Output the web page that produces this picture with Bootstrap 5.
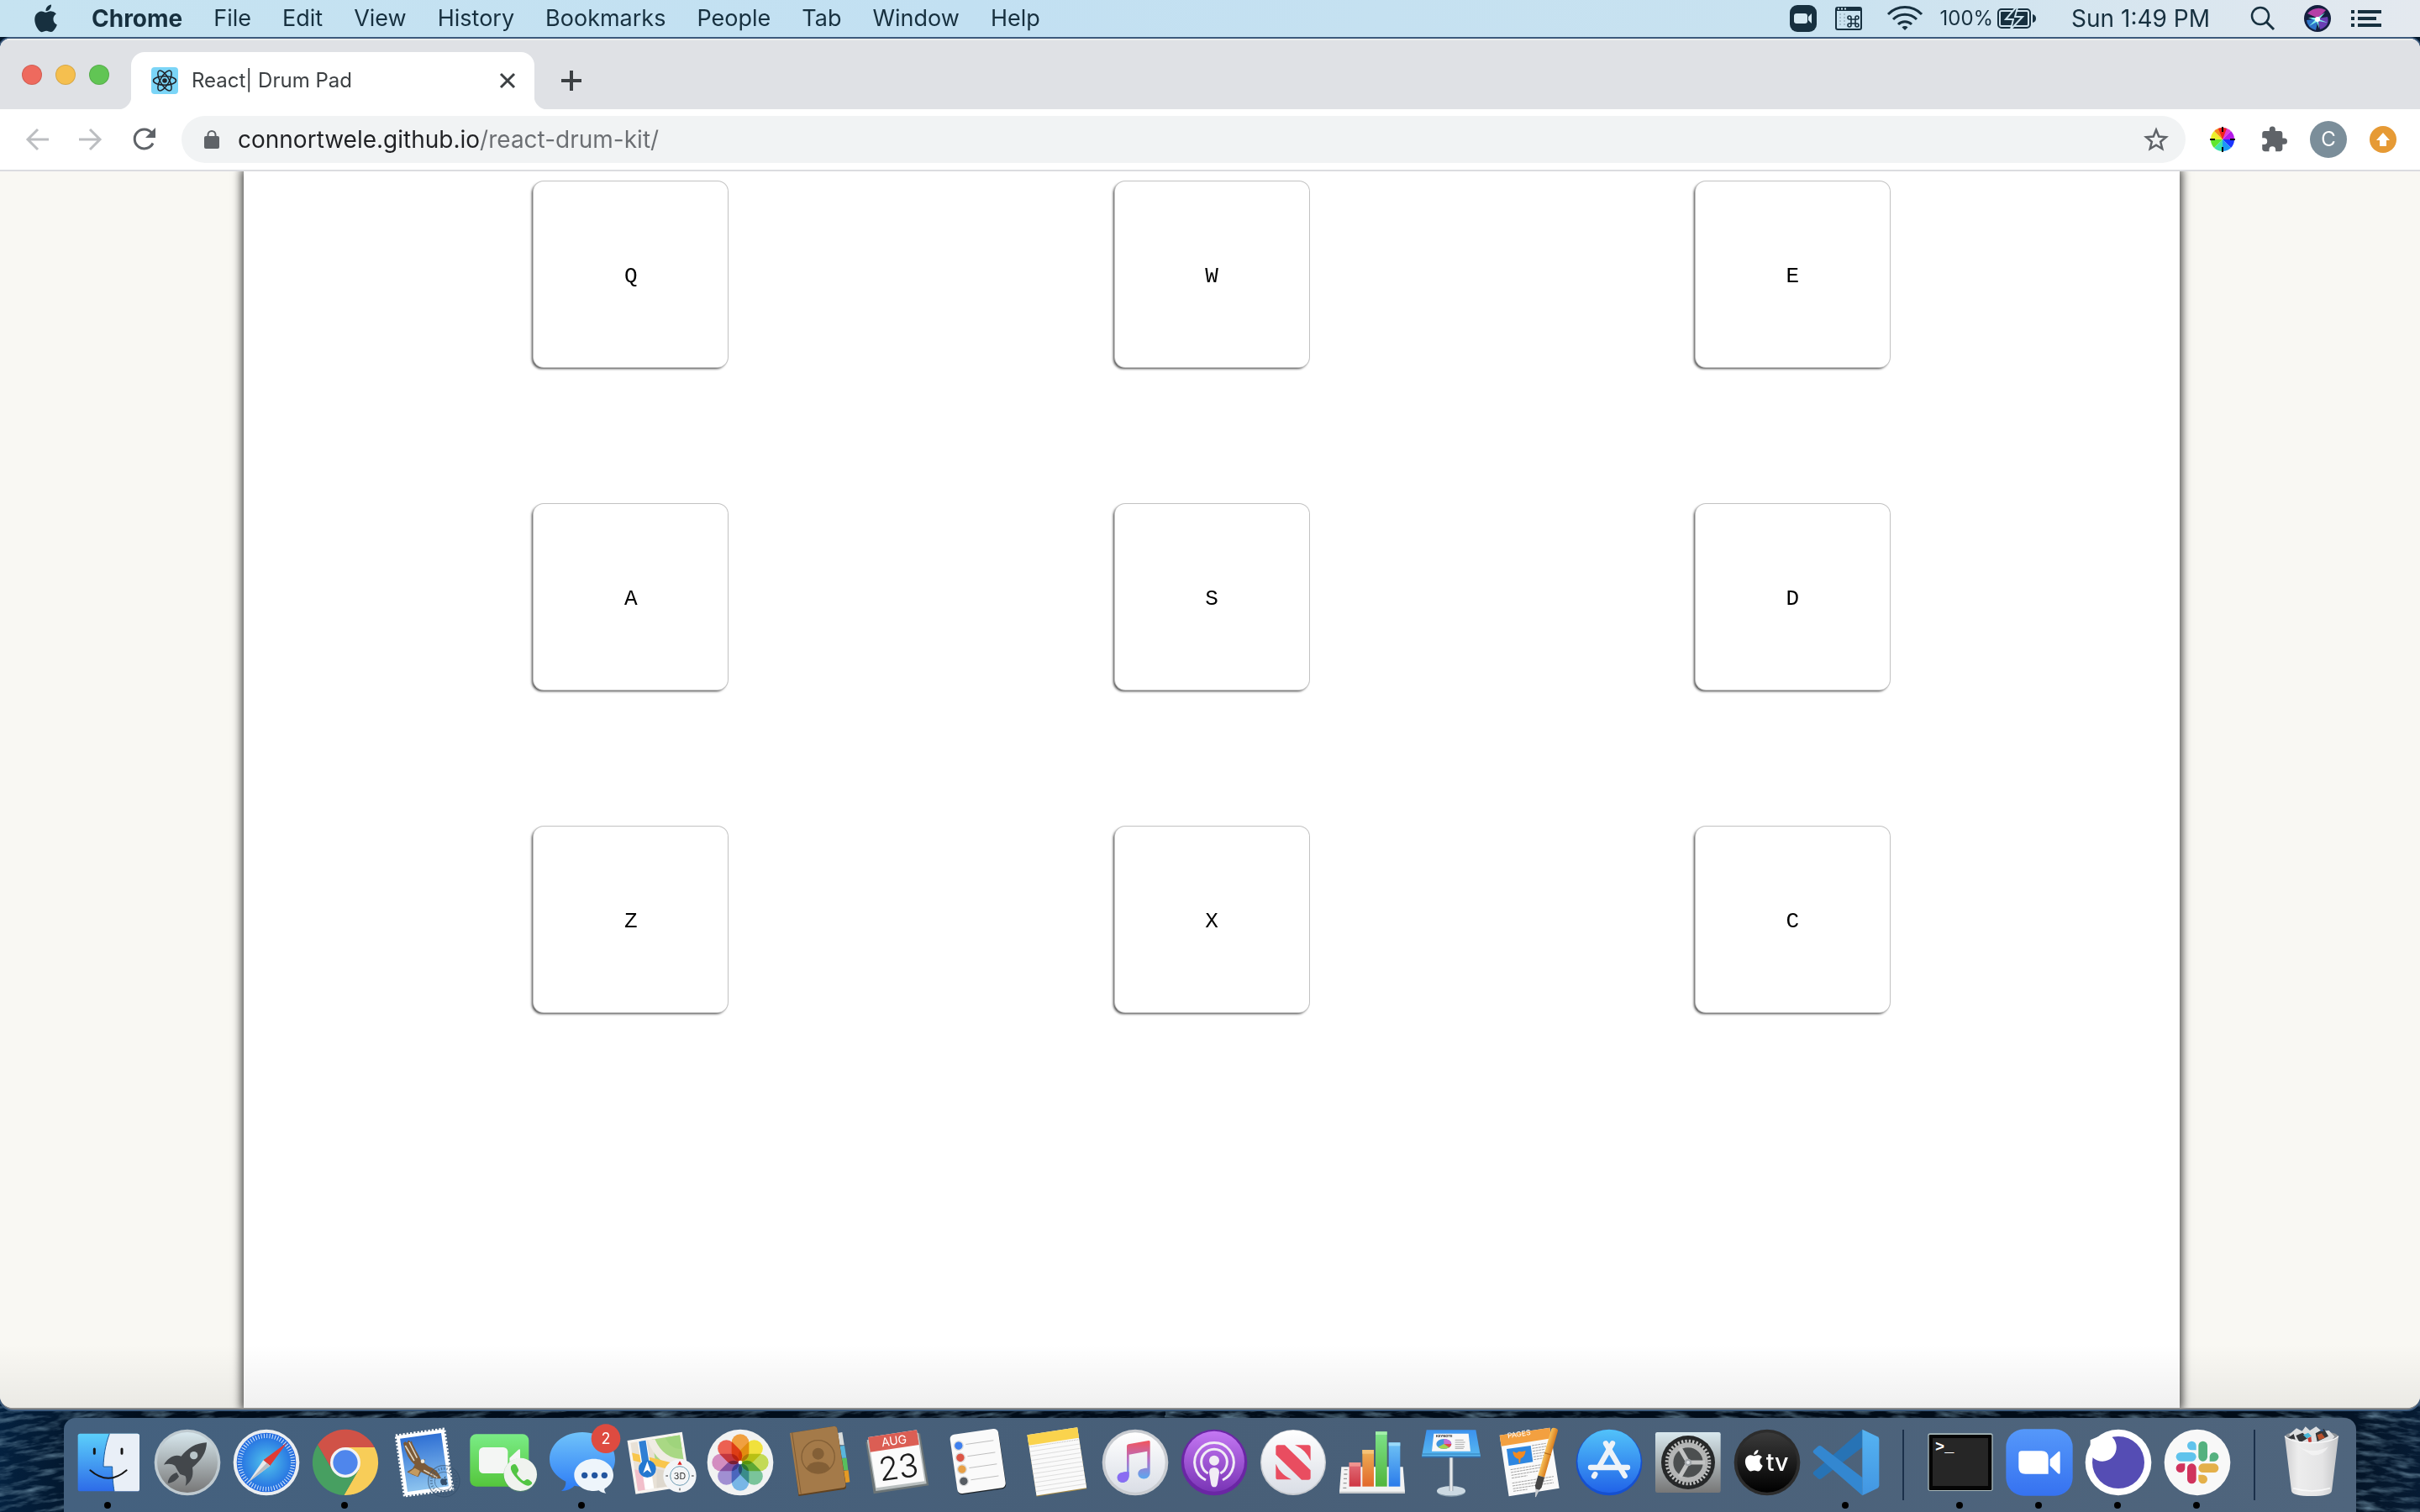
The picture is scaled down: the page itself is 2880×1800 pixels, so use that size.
<!DOCTYPE html>
<html lang="en">
<head>
<meta charset="utf-8">
<meta name="viewport" content="width=device-width, initial-scale=1">
<title>React| Drum Pad</title>
<link rel="stylesheet" href="https://cdn.jsdelivr.net/npm/bootstrap@5.3.0/dist/css/bootstrap.min.css">
<style>
  body { font-family: Inter, "Liberation Sans", sans-serif; background: #04182c; }
  svg { display: block; flex: none; overflow: visible; }
  .btn, .btn:hover { border: 0; padding: 0; color: inherit; border-radius: 0; }
  .desktop { min-height: 100vh; isolation: isolate; position: relative; overflow: hidden; }
  .ocean { position: absolute; inset: auto 0 0 0; width: 100%; height: 140px; z-index: -1; overflow: hidden; }

  /* menu bar */
  .menubar { height: 44px; color: #17303f; font-size: 27px; line-height: 44px; padding: 0 46px 0 42px;
    background: linear-gradient(90deg, #c6e3f1, #c2e0f2 40%, #c8e2f0 74%, #e4e9ef); }
  .menubar a { color: inherit; text-decoration: none; }
  .menu-list { gap: 37px; }
  .app-name { font-size: 28px; font-weight: 700; margin-left: 4px; }
  .charge { font-size: 24px; margin: 0 5px 0 20px; }
  .clock { font-size: 28px; margin: 0 48px 0 42px; }
  .status-gap { margin-right: 22px; }
  .status-gap-lg { margin-right: 30px; }

  /* browser window */
  .browser { margin-top: 2px; border-radius: 12px 12px 16px 16px; overflow: hidden; background: #fff;
    box-shadow: 0 0 0 2px #3c5a7c; border-bottom: 2px solid #8b8b8b; }
  .tabstrip { height: 84px; background: #dfe1e5; padding: 16px 26px 0; border-top: 2px solid #eceded; }
  .lights { gap: 16px; height: 50px; }
  .light { width: 24px; height: 24px; border-radius: 50%; border: 1px solid rgba(0, 0, 0, .12); }
  .light-r { background: #ee6a5e; } .light-y { background: #f5bf4f; } .light-g { background: #61c554; }
  .tab-open { position: relative; width: 480px; height: 68px; margin: -2px 0 0 26px; padding: 0 23px 0 24px;
    background: #fff; border-radius: 16px 16px 0 0; color: #3c4043; font-size: 24px; }
  .tab-open::before, .tab-open::after { content: ""; position: absolute; bottom: 0; width: 16px; height: 16px; }
  .tab-open::before { left: -16px; background: radial-gradient(circle at 0 0, transparent 16px, #fff 17px); }
  .tab-open::after { right: -16px; background: radial-gradient(circle at 100% 0, transparent 16px, #fff 17px); }
  .tab-plus { margin: 0 0 2px 32px; }
  .toolbar { height: 74px; padding: 0 28px 0 30px; border-bottom: 2px solid #dbdce0; color: #5f6368; }
  .nav-btns { gap: 36px; width: 186px; }
  .omnibox { height: 56px; background: #f1f3f4; border-radius: 28px; padding: 0 20px 0 27px; }
  .address { border: 0; outline: 0; height: 56px; font-size: 28px; color: transparent; padding: 0; margin-left: 22px;
    background: linear-gradient(90deg, #202124 289px, #6b6e72 289px); -webkit-background-clip: text; background-clip: text; }
  .extensions { margin-left: 28px; gap: 27px; }
  .avatar, .avatar:hover { width: 44px; height: 44px; border-radius: 50%; background: #7b8e9a; color: #fff; font-size: 24px; line-height: 44px; }

  /* drum machine */
  .stage { background: #f9f8f3; padding-left: 4px; overflow: hidden; position: relative; }
  .stage::after { content: ""; position: absolute; inset: auto 0 0 0; height: 76px; pointer-events: none;
    background: linear-gradient(transparent, rgba(0, 0, 0, .06)); }
  .drum { width: 80vw; background: #fff; box-shadow: 0 0 10px 3px rgba(0, 0, 0, .7); align-content: flex-start; row-gap: 163px; padding-top: 12px; }
  .drum-cell { width: 30%; }
  .drum-key { width: 10vw; max-width: 231px; height: 221px; border: 0; border-radius: 12px; background: #fff; color: #000; padding: 4px 0 0;
    font: 26px "Courier New", "Liberation Mono", monospace; box-shadow: 0 0 0 1px #c2c2c2, -2px 2px 3px rgba(0, 0, 0, .75); }

  /* dock */
  .dock { height: 112px; margin-top: 10px; padding: 0 6px; border-radius: 14px 14px 0 0;
    background: linear-gradient(90deg, #44617f, #485f78 50%, #4f657d); }
  .dock-split { width: 42px; height: 84px; padding-top: 14px; }
  .dock-split i { width: 2px; height: 84px; background: #1b304a; }
  .dock text { font-family: Inter, "Liberation Sans", sans-serif; }
  .dock .term-prompt { font-family: "Liberation Mono", monospace; }
  .petals { isolation: isolate; }
  .petals rect { mix-blend-mode: multiply; }
</style>
</head>
<body>
<div class="desktop d-flex flex-column">
  <svg class="ocean" aria-hidden="true">
    <defs>
      <filter id="waves" x="0" y="0" width="100%" height="100%">
        <feTurbulence type="fractalNoise" baseFrequency=".03 .14" numOctaves="4" seed="8"/>
        <feColorMatrix values="0 0 0 0 .24  0 0 0 0 .4  0 0 0 0 .52  1.5 0 0 0 -.68"/>
      </filter>
      <linearGradient id="sea"><stop offset="0" stop-color="#04213f"/><stop offset=".06" stop-color="#010d1b"/><stop offset=".94" stop-color="#010c18"/><stop offset="1" stop-color="#061b33"/></linearGradient>
    </defs>
    <rect width="100%" height="100%" fill="url(#sea)"/>
    <g transform="rotate(-8)"><rect x="-40" width="54%" height="600" filter="url(#waves)"/></g>
    <g transform="rotate(6)"><rect x="48%" y="-400" width="56%" height="600" filter="url(#waves)"/></g>
  </svg>

  <!-- shared paints and shapes -->
  <svg width="0" height="0" class="position-absolute" aria-hidden="true">
    <defs>
      <linearGradient id="gBlue" x2="0" y2="1"><stop stop-color="#5cd0fb"/><stop offset="1" stop-color="#2d6be8"/></linearGradient>
      <linearGradient id="gSilver" x2="0" y2="1"><stop stop-color="#d8e8ee"/><stop offset="1" stop-color="#777"/></linearGradient>
      <linearGradient id="gWhite" x2="0" y2="1"><stop stop-color="#fff"/><stop offset="1" stop-color="#dadee6"/></linearGradient>
      <linearGradient id="gGreen" x2="0" y2="1"><stop stop-color="#7aec86"/><stop offset="1" stop-color="#55c63c"/></linearGradient>
      <linearGradient id="gMsg" x2="0" y2="1"><stop stop-color="#70c3fa"/><stop offset="1" stop-color="#2c7bf6"/></linearGradient>
      <linearGradient id="gSky" x2="0" y2="1"><stop stop-color="#2f70d4"/><stop offset="1" stop-color="#8dc4ef"/></linearGradient>
      <linearGradient id="gNote" x2="0" y2="1"><stop stop-color="#f2545b"/><stop offset=".45" stop-color="#b56fc6"/><stop offset="1" stop-color="#49b4f7"/></linearGradient>
      <linearGradient id="gPod" x2="0" y2="1"><stop stop-color="#c477f3"/><stop offset="1" stop-color="#7a35b6"/></linearGradient>
      <linearGradient id="gStore" x2="0" y2="1"><stop stop-color="#52c3fa"/><stop offset="1" stop-color="#2163e8"/></linearGradient>
      <linearGradient id="gStand" x2="0" y2="1"><stop stop-color="#3b92ee"/><stop offset="1" stop-color="#58b8f0"/></linearGradient>
      <linearGradient id="gZoom" x2="0" y2="1"><stop stop-color="#5598fa"/><stop offset="1" stop-color="#3672f0"/></linearGradient>
      <linearGradient id="gDark" x2="0" y2="1"><stop stop-color="#3a3a3a"/><stop offset="1" stop-color="#000"/></linearGradient>
      <linearGradient id="gCode" x2="0" y2="1"><stop stop-color="#55b3f2"/><stop offset="1" stop-color="#4296e2"/></linearGradient>
      <linearGradient id="gBar1" x2="0" y2="1"><stop stop-color="#e2707a"/><stop offset="1" stop-color="#cf3744"/></linearGradient>
      <linearGradient id="gBar2" x2="0" y2="1"><stop stop-color="#eeb055"/><stop offset="1" stop-color="#e2682b"/></linearGradient>
      <linearGradient id="gBar3" x2="0" y2="1"><stop stop-color="#7ee38a"/><stop offset="1" stop-color="#51b53c"/></linearGradient>
      <linearGradient id="gBar4" x2="0" y2="1"><stop stop-color="#6fc3f5"/><stop offset="1" stop-color="#2b7bea"/></linearGradient>
      <linearGradient id="gPen"><stop stop-color="#f8c25a"/><stop offset="1" stop-color="#d87c1e"/></linearGradient>
      <linearGradient id="gPole"><stop stop-color="#8d9aa5"/><stop offset=".5" stop-color="#fff"/><stop offset="1" stop-color="#8d9aa5"/></linearGradient>
      <linearGradient id="gBin"><stop stop-color="#cfcfd1"/><stop offset=".25" stop-color="#ededed"/><stop offset=".7" stop-color="#e4e4e5"/><stop offset="1" stop-color="#c4c5c7"/></linearGradient>
      <radialGradient id="gSafari"><stop stop-color="#51c4ec"/><stop offset="1" stop-color="#2168e0"/></radialGradient>
      <path id="apple" d="M17.05 12.54c-.03-2.85 2.33-4.22 2.43-4.28-1.33-1.94-3.4-2.2-4.12-2.23-1.75-.18-3.42 1.03-4.31 1.03-.9 0-2.27-1.01-3.73-.98-1.92.03-3.69 1.12-4.68 2.83-2 3.46-.51 8.59 1.43 11.4.95 1.38 2.08 2.92 3.57 2.86 1.43-.06 1.97-.92 3.7-.92s2.22.92 3.73.9c1.54-.03 2.51-1.4 3.45-2.79 1.09-1.59 1.54-3.14 1.56-3.22-.03-.02-2.99-1.15-3.03-4.6zM14.2 4.16c.79-.96 1.32-2.28 1.18-3.61-1.14.05-2.52.76-3.33 1.72-.73.85-1.37 2.2-1.2 3.5 1.27.1 2.57-.65 3.35-1.61z"/>
    </defs>
  </svg>

  <header class="menubar d-flex align-items-center justify-content-between">
    <nav class="menu-list d-flex align-items-center">
      <a href="#" aria-label="Apple menu"><svg width="26" height="34" viewBox="2.2 .5 18 23" fill="#17303f"><use href="#apple"/></svg></a>
      <a href="#" class="app-name">Chrome</a>
      <a href="#">File</a><a href="#">Edit</a><a href="#">View</a><a href="#">History</a><a href="#">Bookmarks</a><a href="#">People</a><a href="#">Tab</a><a href="#">Window</a><a href="#">Help</a>
    </nav>
    <div class="d-flex align-items-center">
      <svg class="status-gap" width="32" height="32" viewBox="0 0 32 32"><rect width="32" height="32" rx="9" fill="#17303f"/><rect x="5" y="10" width="16" height="12" rx="3" fill="#d5e9f2"/><path d="M22 14l4-4v12l-4-4z" fill="#d5e9f2"/></svg>
      <svg class="status-gap-lg" width="32" height="28" viewBox="0 0 32 28" fill="none" stroke="#17303f" stroke-width="2"><rect x="1" y="1" width="30" height="26" rx="2"/><path d="M1 3h30" stroke-width="4"/><path d="M3 2.500h2m2 0h2m2 0h2" stroke="#cfe5f0"/><path d="M6 8v16m5-16v16" stroke-width="1" stroke-dasharray="2 2" opacity=".4"/><path d="M19 15h5v5h-5zM19 15h-2a2 2 0 1 1 2-2zM24 15h2a2 2 0 1 0-2-2zM19 20h-2a2 2 0 1 0 2 2zM24 20h2a2 2 0 1 1-2 2z" stroke-width="1.600"/></svg>
      <svg width="42" height="30" viewBox="0 0 42 30" fill="none" stroke="#17303f" stroke-width="3"><path d="M1 10a28 28 0 0 1 40 0M7 16a20 20 0 0 1 28 0M13 22a11.500 11.500 0 0 1 16 0"/><path d="M17.500 25.500a5 5 0 0 1 7 0L21 29z" fill="#17303f" stroke="none"/></svg>
      <span class="charge">100%</span>
      <svg width="46" height="24" viewBox="0 0 46 24"><rect x="1" y="1" width="38" height="22" rx="4" fill="none" stroke="#17303f" stroke-width="2"/><rect x="4" y="4" width="32" height="16" rx="1" fill="#17303f"/><path d="M42 7q4 1 4 5t-4 5z" fill="#17303f"/><path d="M22-1L10 13h9l-3 12 14-15h-9l3-11z" fill="#17303f" stroke="#cfe5f0" stroke-width="2"/></svg>
      <time class="clock">Sun 1:49 PM</time>
      <svg class="status-gap-lg" width="34" height="30" viewBox="0 0 34 30" fill="none" stroke="#17303f" stroke-width="2.500"><circle cx="12" cy="12" r="10"/><path d="M19 19l9 9" stroke-width="3"/></svg>
      <svg class="status-gap" width="32" height="32" viewBox="0 0 32 32"><circle cx="16" cy="16" r="16" fill="#14203f"/><path d="M4 10Q14 0 26 6L17 16z" fill="#b53fa6"/><path d="M3 18q1 9 11 12l3-14z" fill="#2e74c9"/><path d="M28 14q3 11-9 15l-3-13z" fill="#6a3fb4"/><path d="M5 15l11 0 9-6-7 8 10 4-11-2 1 9-3-8-9 5 7-7z" fill="#7ff0ec"/><circle cx="16" cy="17" r="3" fill="#fff"/></svg>
      <svg width="38" height="20" viewBox="-2 0 38 20" stroke="#17303f" stroke-width="4"><path d="M0 2h4M8 2h28M0 10h4M8 10h22M0 18h4M8 18h28"/></svg>
    </div>
  </header>

  <main class="browser d-flex flex-column flex-grow-1">
    <div class="tabstrip d-flex">
      <div class="lights d-flex align-items-center">
        <button class="light light-r p-0" aria-label="Close window"></button>
        <button class="light light-y p-0" aria-label="Minimize"></button>
        <button class="light light-g p-0" aria-label="Zoom window"></button>
      </div>
      <div class="tab-open d-flex align-items-center">
        <svg width="32" height="32" viewBox="0 0 32 32"><rect width="32" height="32" rx="4" fill="#7bd5f7"/><g fill="none" stroke="#20232a" stroke-width="1.500"><ellipse cx="16" cy="16" rx="13.500" ry="5.200"/><ellipse cx="16" cy="16" rx="13.500" ry="5.200" transform="rotate(60 16 16)"/><ellipse cx="16" cy="16" rx="13.500" ry="5.200" transform="rotate(120 16 16)"/></g><circle cx="16" cy="16" r="2.800" fill="#20232a"/></svg>
        <span class="ms-3 flex-grow-1">React| Drum Pad</span>
        <button class="btn" aria-label="Close tab"><svg width="18" height="18" viewBox="0 0 18 18" stroke="#3c4043" stroke-width="3"><path d="M1 1l16 16M17 1L1 17"/></svg></button>
      </div>
      <button class="btn tab-plus" aria-label="New tab"><svg width="24" height="24" viewBox="0 0 24 24" stroke="#3c4043" stroke-width="4"><path d="M12 0v24M0 12h24"/></svg></button>
    </div>

    <div class="toolbar d-flex align-items-center">
      <div class="nav-btns d-flex align-items-center">
        <button class="btn" aria-label="Back"><svg width="28" height="28" viewBox="0 0 28 28" fill="none" stroke="#bcbec1" stroke-width="3"><path d="M28 14H3M15 2L3 14l12 12"/></svg></button>
        <button class="btn" aria-label="Forward"><svg width="28" height="28" viewBox="0 0 28 28" fill="none" stroke="#bcbec1" stroke-width="3"><path d="M0 14h25M13 2l12 12-12 12"/></svg></button>
        <button class="btn" aria-label="Reload"><svg width="28" height="28" viewBox="0 0 28 28"><path d="M24 18.500A11.500 11.500 0 1 1 22.500 6" fill="none" stroke="#5f6368" stroke-width="3"/><path d="M27 0v12H15z" fill="#5f6368"/></svg></button>
      </div>
      <form class="omnibox d-flex align-items-center flex-grow-1">
        <svg width="18" height="22" viewBox="0 0 18 22"><rect y="7" width="18" height="15" rx="2" fill="#5f6368"/><path d="M4.500 8V5.500a4.500 4.500 0 0 1 9 0V8" fill="none" stroke="#5f6368" stroke-width="2"/></svg>
        <input class="address flex-grow-1" type="text" aria-label="Address" value="connortwele.github.io/react-drum-kit/">
        <button class="btn" type="button" aria-label="Bookmark this page"><svg width="30" height="30" viewBox="0 0 30 30" fill="none" stroke="#5f6368" stroke-width="2.500"><path d="M15 3.500l3.200 8 8.600.7-6.600 5.500 2.100 8.500L15 21.700l-7.300 4.500 2.100-8.500-6.600-5.500 8.600-.7z"/></svg></button>
      </form>
      <div class="extensions d-flex align-items-center">
        <button class="btn" aria-label="Color picker"><svg width="32" height="32" viewBox="-16 -16 32 32"><path d="M0 0V-14A14 14 0 0 1 10-10z" fill="#e13bd6"/><path d="M0 0L10-10A14 14 0 0 1 14 0z" fill="#b318e8"/><path d="M0 0H14A14 14 0 0 1 10 10z" fill="#1a35ff"/><path d="M0 0L10 10A14 14 0 0 1 0 14z" fill="#1b9af5"/><path d="M0 0V14A14 14 0 0 1-10 10z" fill="#3fe2b0"/><path d="M0 0L-10 10A14 14 0 0 1-14 0z" fill="#5fe62f"/><path d="M0 0H-14A14 14 0 0 1-10-10z" fill="#ecef2b"/><path d="M0 0L-10-10A14 14 0 0 1 0-14z" fill="#f58a1c"/><path d="M0 0L-5-13A14 14 0 0 1 5-13z" fill="#ef2020"/><path d="M0-15v6M0 15V9M-15 0h6M15 0H9" stroke="#000" stroke-width="2"/></svg></button>
        <button class="btn" aria-label="Extensions"><svg width="34" height="34" viewBox="-1 0 24 24" fill="#5f6368"><path d="M20.500 11H19V7c0-1.100-.9-2-2-2h-4V3.500a2.500 2.500 0 0 0-5 0V5H4c-1.100 0-2 .9-2 2v3.800h1.500a2.700 2.700 0 0 1 0 5.400H2V20c0 1.100.9 2 2 2h3.800v-1.500a2.700 2.700 0 0 1 5.400 0V22H17c1.100 0 2-.9 2-2v-4h1.500a2.500 2.500 0 0 0 0-5z"/></svg></button>
        <button class="btn avatar">C</button>
        <button class="btn" aria-label="Update available"><svg width="32" height="32" viewBox="0 0 32 32"><circle cx="16" cy="16" r="16" fill="#e69a35"/><path d="M16 8l8 9h-4v7h-8v-7H8z" fill="#fff"/></svg></button>
      </div>
    </div>

    <section class="stage flex-grow-1 d-flex justify-content-center">
      <div class="drum d-flex flex-wrap justify-content-center">
        <div class="drum-cell text-center"><button class="drum-key">Q</button></div>
        <div class="drum-cell text-center"><button class="drum-key">W</button></div>
        <div class="drum-cell text-center"><button class="drum-key">E</button></div>
        <div class="drum-cell text-center"><button class="drum-key">A</button></div>
        <div class="drum-cell text-center"><button class="drum-key">S</button></div>
        <div class="drum-cell text-center"><button class="drum-key">D</button></div>
        <div class="drum-cell text-center"><button class="drum-key">Z</button></div>
        <div class="drum-cell text-center"><button class="drum-key">X</button></div>
        <div class="drum-cell text-center"><button class="drum-key">C</button></div>
      </div>
    </section>
  </main>

  <footer class="dock d-flex align-self-center">
    <button class="btn" aria-label="Finder"><svg width="94" height="112" viewBox="-141 -159 282 336">
      <rect x="-109" y="-103" width="220" height="206" rx="8" fill="url(#gBlue)"/><path d="M4-103H103q8 0 8 8V95q0 8-8 8H21C17 80 14 50 14 15H-18C-17-20-12-60 4-103z" fill="#e9eff7"/><path d="M4-103C-12-60-17-20-18 15H14C14 50 17 80 21 103" fill="none" stroke="#1d5d9c" stroke-width="3"/><path d="M-50-48v16M48-48v16" stroke="#151515" stroke-width="9" stroke-linecap="round"/><path d="M-65 28Q0 85 65 28" fill="none" stroke="#151515" stroke-width="6" stroke-linecap="round"/><circle cx="-3" cy="153" r="12"/></svg></button>
    <button class="btn" aria-label="Launchpad"><svg width="94" height="112" viewBox="-141 -159 282 336">
      <circle r="118" fill="#bfcad0"/><circle r="108" fill="url(#gSilver)"/><path d="M69-71C30-70 0-50-22-22-50-32-72-12-84 8-70 4-55 4-44 12L-34 30-26 42-8 48C-2 58-4 72-7 84 10 70 24 55 18 18 50-8 68-35 69-71zM-38 36C-55 40-68 55-70 74-50 72-38 62-30 50z" fill="#43474b"/><circle cx="23" cy="-25" r="14" fill="#b9c5ca"/></svg></button>
    <button class="btn" aria-label="Safari"><svg width="94" height="112" viewBox="-141 -159 282 336">
      <circle r="118" fill="#eceef0"/><circle r="106" fill="url(#gSafari)"/><circle r="95" fill="none" stroke="#d6e8fa" stroke-width="16" stroke-dasharray="3 6.950"/><path d="M74-71L-11-8 13 12z" fill="#e03b35"/><path d="M-66 72L-11-8 13 12z" fill="#e9e9ea"/><path d="M-66 72L1 2 13 12z" fill="#b9bdc2"/></svg></button>
    <button class="btn" aria-label="Chrome"><svg width="94" height="112" viewBox="-141 -159 282 336">
      <path d="M-99-63A117 117 0 0 1 104-54H0L0 0-47 27z" fill="#d05247"/><path d="M104-54A117 117 0 0 1-5 117L47 27 0 0V-54z" fill="#f8cd58"/><path d="M-5 117A117 117 0 0 1-99-63L-47 27 0 0 47 27z" fill="#479f61"/><circle r="54" fill="#f4f4f4"/><circle r="44" fill="#4f86ec"/><circle cx="-3" cy="153" r="12"/></svg></button>
    <button class="btn" aria-label="Mail"><svg width="94" height="112" viewBox="-141 -159 282 336">
      <g transform="rotate(-8)"><rect x="-86" y="-108" width="172" height="216" fill="#fff"/><rect x="-88" y="-110" width="176" height="220" fill="none" stroke="#fff" stroke-width="7" stroke-dasharray="7 6"/><rect x="-74" y="-96" width="148" height="192" fill="url(#gSky)"/></g><path d="M-75-68Q-68-80-62-70-56-86-50-72-46-84-42-66L-30-42Q-16-20-12-6L2-12 0 2 16 14Q44 22 60 56 40 62 14 46 0 40-12 34L-22 52-42 44-62 34-42 22-34 8Q-62-12-75-68z" fill="#7b5a38"/><path d="M-68-60l32 54M-54-72l28 56M-2 28l48 26" stroke="#ddd2bf" stroke-width="5" fill="none"/><path d="M-34 20l18 10-8 20-32-14z" fill="#c39a5f"/><circle cx="-6" cy="-4" r="7" fill="#f1ead9"/><g fill="none" stroke="#36506c" opacity=".6"><circle cx="70" cy="67" r="56" stroke-width="4"/><circle cx="70" cy="67" r="45" stroke-width="9" stroke-dasharray="4 6"/><circle cx="70" cy="67" r="33" stroke-width="3"/></g><use href="#apple" transform="translate(55 49) scale(1.400)" fill="#36506c"/></svg></button>
    <button class="btn" aria-label="FaceTime"><svg width="94" height="112" viewBox="-141 -159 282 336">
      <rect x="-119" y="-101" width="210" height="187" rx="22" fill="url(#gGreen)"/><rect x="-87" y="-54" width="103" height="93" rx="16" fill="#f4f6f4"/><path d="M22-16L54-46q6-4 6 3V28q0 8-6 3L22 8z" fill="#f4f6f4"/><circle cx="61" cy="45" r="60" fill="#5a9a62" opacity=".5"/><circle cx="61" cy="43" r="59" fill="#f0f3ef"/><path d="M33 8q10-6 15 5l6 12q3 7-4 12-4 3 3 12 10 12 17 16 5 2 9-2 6-6 13-1l9 8q5 6-5 11-14 8-42-17Q22 30 27 15q2-5 6-7z" fill="#53c544"/></svg></button>
    <button class="btn" aria-label="Messages, 2 unread"><svg width="94" height="112" viewBox="-141 -159 282 336">
      <path d="M0-108C66-108 117-66 117-11S66 86 0 86q-16 0-28-3-16 18-47 19 18-14 16-34C-96 50-117 22-117-11-117-66-66-108 0-108z" fill="url(#gMsg)"/><path d="M41-13c40 0 70 26 70 58 0 20-12 38-31 48q-4 8 5 17-18-1-26-10-8 2-18 2c-40 0-70-26-70-57s30-58 70-58z" fill="#eef5fb"/><g fill="#22559f"><circle cx="8" cy="46" r="11"/><circle cx="44" cy="46" r="11"/><circle cx="79" cy="46" r="11"/></g><circle cx="84" cy="-85" r="52" fill="#de4b40"/><text x="84" y="-66" font-size="54" fill="#fff" text-anchor="middle">2</text><circle cx="-3" cy="153" r="12"/></svg></button>
    <button class="btn" aria-label="Maps"><svg width="94" height="112" viewBox="-141 -159 282 336">
      <g transform="rotate(-8.800)"><rect x="-108" y="-96" width="198" height="194" fill="#f7f4f0"/><rect x="-98" y="-86" width="178" height="174" fill="#e8e1d6"/><path d="M-20-86H80V40L-20 0z" fill="#a9d884"/><path d="M-10-86Q10-10 80 0V28Q-16 20-36-86z" fill="#f0ece4"/><path d="M28-86q10 44 52 50V-86z" fill="#9fd47c"/><path d="M-98 10L-60 25V88H-98z" fill="#f2bfcb"/><path d="M-98-50L80 25V52L-98-22z" fill="#f9c64c"/><path d="M-72-86h32V88H-72z" fill="#fff"/><path d="M-68-86h25V20h-25z" fill="#2f7fd4"/><path d="M-20 20L80 60V88H-30z" fill="#ded8ce"/></g><circle cx="-50" cy="23" r="31" fill="#2478d0"/><path d="M-50-4l15 42-15-11-15 11z" fill="#fff"/><circle cx="66" cy="48" r="59" fill="#f3f5f7"/><circle cx="66" cy="48" r="34" fill="none" stroke="#6f9db4" stroke-width="3"/><path d="M66-5l8 13H58z" fill="#d22"/><path d="M16 48h8m84 0h8M66 92v8" stroke="#222" stroke-width="3"/><text x="66" y="60" font-size="32" fill="#333" text-anchor="middle">3D</text></svg></button>
    <button class="btn" aria-label="Photos"><svg width="94" height="112" viewBox="-141 -159 282 336">
      <circle r="118" fill="#f1f2f2"/><g class="petals"><rect x="-31" y="-101" width="62" height="98" rx="31" fill="#f0a040"/><rect x="-31" y="-101" width="62" height="98" rx="31" fill="#f1e13c" transform="rotate(45)"/><rect x="-31" y="-101" width="62" height="98" rx="31" fill="#c3da55" transform="rotate(90)"/><rect x="-31" y="-101" width="62" height="98" rx="31" fill="#7ac49a" transform="rotate(135)"/><rect x="-31" y="-101" width="62" height="98" rx="31" fill="#78b6e6" transform="rotate(180)"/><rect x="-31" y="-101" width="62" height="98" rx="31" fill="#a08fd2" transform="rotate(225)"/><rect x="-31" y="-101" width="62" height="98" rx="31" fill="#d38dc0" transform="rotate(270)"/><rect x="-31" y="-101" width="62" height="98" rx="31" fill="#ec6152" transform="rotate(315)"/></g><circle r="7" fill="#fff"/></svg></button>
    <button class="btn" aria-label="Contacts"><svg width="94" height="112" viewBox="-141 -159 282 336">
      <path d="M60-104l22-4 7 46H66z" fill="#d9dcdc"/><path d="M68-58l22-2 7 44H74z" fill="#59b6dd"/><path d="M76-14l22-2 5 44H80z" fill="#58bf5d"/><path d="M82 30l22-2 5 42-24 4z" fill="#e49a25"/><path d="M-100-106L52-129q10-2 12 8L96 84q1 10-8 12L-74 120z" fill="#62421f"/><path d="M-105-105L52-129q10-2 12 8L94 78q1 10-8 12L-73 115z" fill="#a47a49"/><path d="M-97-106L-65 113" stroke="#7e5b33" stroke-width="3"/><circle cx="-4" cy="-20" r="59" fill="none" stroke="#835f36" stroke-width="4"/><circle cx="-4" cy="-31" r="21" fill="#835f36"/><path d="M-46 22Q-36-2-4-2t42 22Q20 38-4 38t-42-16z" fill="#835f36"/></svg></button>
    <button class="btn" aria-label="Calendar"><svg width="94" height="112" viewBox="-141 -159 282 336">
      <path d="M-116-73L78-104 109 82-88 112z" fill="#6c7577"/><path d="M-112-80L72-106 101 76-80 102z" fill="#b9bfbf"/><path d="M-107-90L66-116 94 67-79 91z" fill="#fbfbfb"/><path d="M-107-90L66-116 74-63-100-37z" fill="#db5e54"/><g text-anchor="middle" transform="rotate(-8)"><text x="-4" y="-64" font-size="42" fill="#fff">AUG</text><text x="-2" y="58" font-size="116" font-weight="300" fill="#1c1c1c">23</text></g></svg></button>
    <button class="btn" aria-label="Reminders"><svg width="94" height="112" viewBox="-141 -159 282 336">
      <g transform="translate(2 -5) rotate(-8.200)"><rect x="-86" y="-102" width="174" height="213" rx="16" fill="#1d2328"/><rect x="-87" y="-106" width="174" height="213" rx="16" fill="#fafafa"/><g stroke="#dcdcdc" stroke-width="4"><circle cx="-60" cy="-64" r="16" fill="#3f80ee"/><circle cx="-60" cy="-21" r="16" fill="#dc5546"/><circle cx="-60" cy="21" r="16" fill="#e7a046"/><circle cx="-60" cy="64" r="16" fill="#565c62"/></g><path d="M-34-65H66M-34-22H66M-34 20H66M-34 63H66" stroke="#a6a6a6" stroke-width="2"/></g></svg></button>
    <button class="btn" aria-label="Notes"><svg width="94" height="112" viewBox="-141 -159 282 336">
      <g transform="translate(2 -3) rotate(-8.700)"><rect x="-90" y="-108" width="181" height="220" fill="#a98c45"/><rect x="-90" y="-110" width="181" height="219" fill="#fafafa"/><rect x="-90" y="-110" width="181" height="38" fill="#fad34d"/><path d="M-90-66H91" stroke="#999" stroke-width="2" stroke-dasharray="3 3"/><path d="M-90-50H91M-90-34H91M-90-18H91M-90-2H91M-90 14H91M-90 30H91M-90 46H91M-90 62H91M-90 78H91M-90 94H91" stroke="#d2d2d2" stroke-width="2"/></g></svg></button>
    <button class="btn" aria-label="Music"><svg width="94" height="112" viewBox="-141 -159 282 336">
      <circle r="118" fill="#c9ccd1"/><circle r="107" fill="url(#gWhite)"/><path d="M-30-58q0-6 6-7L48-78q5-1 5 5V36c0 30-43 28-43 4 0-14 14-20 33-20V-40L-22-28V46c0 34-42 32-42 8 0-14 14-20 34-20z" fill="url(#gNote)"/><path d="M-22 34V46c0 34-42 32-42 8 0-14 14-20 34-20z" fill="#8a6cf2"/></svg></button>
    <button class="btn" aria-label="Podcasts"><svg width="94" height="112" viewBox="-141 -159 282 336">
      <circle r="118" fill="#6a26a4"/><circle r="108" cy="-4" fill="url(#gPod)"/><g fill="none" stroke="#f1ecf5" stroke-width="9"><path d="M-30 63a70 70 0 1 1 60 0M-22 39a46 46 0 1 1 44 0"/></g><circle cy="-7" r="18" fill="#f1ecf5"/><path d="M-18 36q0-18 18-18t18 18L12 74q-2 14-12 14t-12-14z" fill="#f1ecf5"/></svg></button>
    <button class="btn" aria-label="News"><svg width="94" height="112" viewBox="-141 -159 282 336">
      <circle r="117" fill="#c9ccd1"/><circle r="113" cy="-2" fill="url(#gWhite)"/><path d="M-54-62H-30L62 28V54q0 8-8 8H30L-62-28V-54q0-8 8-8zM6-62H54q8 0 8 8V-6Q46-44 6-62zM-6 61H-54q-8 0-8-8V5Q-46 43-6 61z" fill="#e94d60"/></svg></button>
    <button class="btn" aria-label="Numbers"><svg width="94" height="112" viewBox="-141 -159 282 336">
      <path d="M-110 16H110L117 104V110H-117V104z" fill="#f3f3f3"/><path d="M-117 104H117v6H-117z" fill="#c6c9cb"/><path d="M-100 26h12m-13 16h12m-13 16h12m-13 16h12m-13 17h12" stroke="#999" stroke-width="4"/><rect x="-82" y="0" width="41" height="86" fill="url(#gBar1)"/><rect x="-82" y="0" width="41" height="14" fill="#f0938f"/><rect x="-35" y="-45" width="41" height="131" fill="url(#gBar2)"/><rect x="-35" y="-45" width="41" height="14" fill="#f6c377"/><rect x="12" y="-110" width="41" height="196" fill="url(#gBar3)"/><rect x="12" y="-110" width="41" height="11" fill="#a4efab"/><rect x="59" y="-71" width="41" height="157" fill="url(#gBar4)"/><rect x="59" y="-71" width="41" height="12" fill="#9adaf9"/></svg></button>
    <button class="btn" aria-label="Keynote"><svg width="94" height="112" viewBox="-141 -159 282 336">
      <ellipse cy="104" rx="51" ry="18" fill="#8ba0af"/><ellipse cy="101" rx="51" ry="17" fill="#ccd9e2"/><rect x="-7" y="-20" width="14" height="122" fill="url(#gPole)"/><path d="M-88-116H88L105-22H-105z" fill="url(#gStand)"/><path d="M-105-22H105v5H-105z" fill="#2f6fb0"/><path d="M-103-30H103" stroke="#1d5d94" stroke-width="2"/><path d="M-62-103H62L69-40H-69z" fill="#f8f8f8"/><text x="-54" y="-91" font-size="12" font-weight="700" fill="#222">KEYNOTE</text><ellipse cx="-26" cy="-66" rx="27" ry="18" fill="#3e95dd"/><path d="M-26-66V-84q26 2 27 18z" fill="#c76fd6"/><path d="M-26-66H1q0 8-8 13z" fill="#e54848"/><path d="M-26-66L-7-53q-22 10-40-2z" fill="#a4d44e"/><path d="M14-80h30M14-72h36M14-64h32M14-56h34M14-50h30" stroke="#aaa" stroke-width="3"/></svg></button>
    <button class="btn" aria-label="Pages"><svg width="94" height="112" viewBox="-141 -159 282 336">
      <path d="M-109-97L70-124 104 92-76 121z" fill="#fafafa"/><path d="M-109-97L70-124 76-86-103-58z" fill="#f3a040"/><text x="-78" y="-84" font-size="26" fill="#fff" transform="rotate(-9 -92 -74)">PAGES</text><path d="M-84-48L2-60 10-2-76 12z" fill="#2d86e0"/><path d="M-62-40l14 6 8-6 10 2 14-4q-2 22-18 28l-2 16h-4l-1-14q-20-6-21-28z" fill="#f08a22"/><path d="M6-60l50-8M8-50l50-8M9-40l44-7M10-30l46-7M12-20l40-6M13-10l36-6M-70 26L40 8M-69 36L36 18M-67 46L30 30M-66 56L-10 47M-64 74L84 50M-63 84L80 62M-61 94L84 72M-60 103L-10 96" stroke="#a3a3a3" stroke-width="3" stroke-dasharray="9 2"/><g transform="translate(-8 0) rotate(16 62 0)"><path d="M50-120q0-8 12-8t12 8V52H50z" fill="url(#gPen)"/><path d="M50 52H74V90l-6 12H56l-6-12z" fill="#454545"/><path d="M55 100H69L64 128h-3z" fill="#c9ccd0"/><path d="M50-32h24" stroke="#b56a18" stroke-width="4"/></g></svg></button>
    <button class="btn" aria-label="App Store"><svg width="94" height="112" viewBox="-141 -159 282 336">
      <circle r="118" fill="#1550d0"/><circle r="113" cy="-5" fill="url(#gStore)"/><g stroke="#eef3f8" stroke-width="19" stroke-linecap="round" fill="none"><path d="M-66 18H66"/><path d="M12-68L-34 12"/><path d="M-12-68L56 48"/><path d="M-50 42l-4 7"/></g></svg></button>
    <button class="btn" aria-label="System Preferences"><svg width="94" height="112" viewBox="-141 -159 282 336">
      <rect x="-117" y="-108" width="233" height="216" rx="7" fill="url(#gSilver)"/><circle r="96" fill="#262829"/><circle r="76" fill="none" stroke="#bfc0c0" stroke-width="12" stroke-dasharray="7 6.260"/><circle r="62" fill="#4c4f50" stroke="#b4b5b5" stroke-width="18"/><path d="M0 0H60M0 0L-30-52M0 0L-30 52" stroke="#c2c3c3" stroke-width="15"/><circle r="13" fill="#a2a6aa"/><circle r="6" fill="#dfe3e6"/></svg></button>
    <button class="btn" aria-label="TV"><svg width="94" height="112" viewBox="-141 -159 282 336">
      <circle r="118" fill="#2c2c2c"/><circle r="107" fill="url(#gDark)"/><use href="#apple" transform="translate(-84 -47) scale(3.400)" fill="#fff"/><text x="-4" y="30" font-size="86" font-weight="500" fill="#fff">tv</text></svg></button>
    <button class="btn" aria-label="Visual Studio Code"><svg width="94" height="112" viewBox="-141 -159 282 336">
      <path d="M58-118V-54L-88 58q-6 4-12 0l-15-14q-6-6 0-11z" fill="#2773b5"/><path d="M58 118V54L-88-58q-6-4-12 0l-15 14q-6 6 0 11z" fill="#3387d0"/><path d="M58-118L112-92q6 3 6 10V82q0 7-6 10L58 118z" fill="url(#gCode)"/><circle cx="-3" cy="153" r="12"/></svg></button>
    <div class="dock-split d-flex justify-content-center"><i class="flex-shrink-0"></i></div>
    <button class="btn" aria-label="Terminal"><svg width="94" height="112" viewBox="-141 -159 282 336">
      <rect x="-116" y="-104" width="232" height="206" rx="8" fill="#a8b9bb"/><rect x="-112" y="-99" width="224" height="198" rx="4" fill="#050505"/><rect x="-99" y="-87" width="198" height="171" fill="#262626"/><text class="term-prompt" x="-90" y="-38" font-size="56" font-weight="700" fill="#fff">&gt;_</text><circle cx="-3" cy="153" r="12"/></svg></button>
    <button class="btn" aria-label="Zoom"><svg width="94" height="112" viewBox="-141 -159 282 336">
      <rect x="-119" y="-119" width="238" height="238" rx="64" fill="url(#gZoom)"/><path d="M-63-41H8q24 0 24 24V41H-50q-24 0-24-24V-30q0-11 11-11zM38-11L66-37q8-6 8 3V36q0 9-8 3L38 11z" fill="#fff"/><circle cx="-3" cy="153" r="12"/></svg></button>
    <button class="btn" aria-label="Insomnia"><svg width="94" height="112" viewBox="-141 -159 282 336">
      <circle r="118" fill="#fff"/><circle r="93" fill="#554db4"/><path d="M-100-28L-92-18A47 47 0 1 0-22-90L-30-110-100-80z" fill="#fff"/><circle cx="-3" cy="153" r="12"/></svg></button>
    <button class="btn" aria-label="Slack"><svg width="94" height="112" viewBox="-141 -159 282 336">
      <circle r="118" fill="#f8f8f8"/><g fill="#60c3ec"><path d="M-4-44V-60a16 16 0 1 0-16 16z"/><rect x="-76" y="-36" width="72" height="32" rx="16"/></g><g fill="#55b17f"><rect x="4" y="-76" width="32" height="72" rx="16"/><path d="M44-4H60a16 16 0 1 0-16-16z"/></g><g fill="#e4b04a"><rect x="4" y="4" width="72" height="32" rx="16"/><path d="M4 44V60a16 16 0 1 0 16-16z"/></g><g fill="#d0335d"><path d="M-44 4H-60a16 16 0 1 0 16 16z"/><rect x="-36" y="4" width="32" height="72" rx="16"/></g><circle cx="-3" cy="153" r="12"/></svg></button>
    <div class="dock-split d-flex justify-content-center"><i class="flex-shrink-0"></i></div>
    <button class="btn" aria-label="Trash"><svg width="94" height="112" viewBox="-141 -159 282 336">
      <ellipse cy="-93" rx="95" ry="20" fill="#8f9499"/><path d="M-80-100l26-22 20 10 12-16 16 14 22-14 20 16 26-2 20 22-20 24H-60z" fill="#dcdee0"/><path d="M-56-96l24-10 20 18-30 18zM14-104l30-16 16 26-40 20zM-84-88l20-14 6 20z" fill="#33363a"/><path d="M-30-98l18-8 12 12-18 8z" fill="#49b7d8"/><path d="M20-98l16-6 12 16-22 8z" fill="#b8502c"/><path d="M-14-86l12-6 2 18-10 4z" fill="#c43a34"/><path d="M28-112l10-6 6 6z" fill="#2d62a8"/><path d="M-96-94C-70-62 70-62 96-94L72 102q-4 18-72 18t-72-18z" fill="url(#gBin)"/><path d="M-96-94C-70-62 70-62 96-94" fill="none" stroke="#fafafa" stroke-width="4"/><path d="M-60-64q60 40 120 8-20 34-60 30" fill="#f7f7f7" opacity=".7"/><path d="M-66 92q66 20 132 0" fill="none" stroke="#fff" stroke-width="5" opacity=".7"/></svg></button>
  </footer>
</div>
<script src="https://cdn.jsdelivr.net/npm/bootstrap@5.3.0/dist/js/bootstrap.bundle.min.js"></script>
</body>
</html>
